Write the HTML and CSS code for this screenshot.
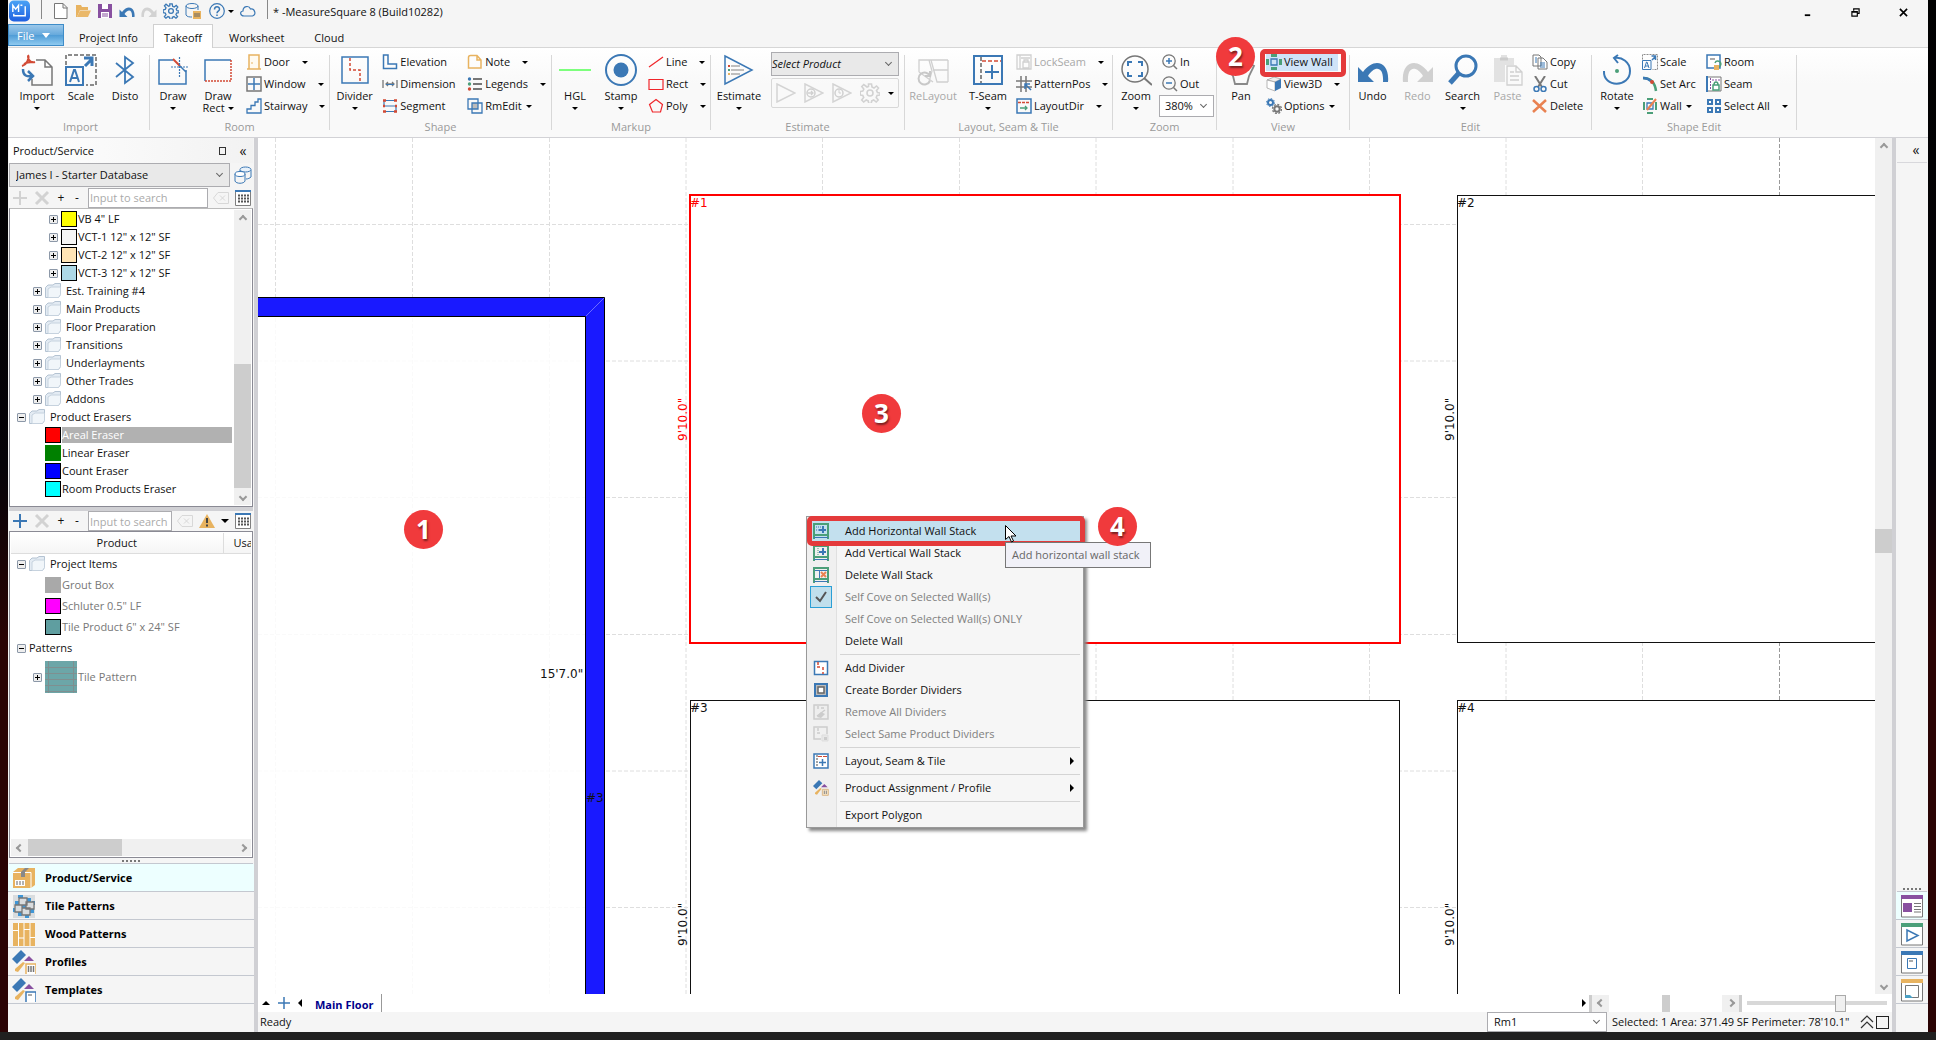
FILE: index.html
```html
<!DOCTYPE html>
<html lang="en">
<head>
<meta charset="utf-8">
<title>MeasureSquare 8</title>
<link rel="stylesheet" href="styles.css">
</head>
<body>
<svg class="defs" aria-hidden="true">
  <symbol id="folder" viewBox="0 0 16 16"><path d="M.5 14.500V4.500L3 2h5l2-1.500h5.500v11l-2 3z" fill="#e3ebf3" stroke="#b4c3d2"/><path d="M3 14.500V6l3-2h9.500v7.500l-2 3z" fill="#f1f6fa" stroke="#c6d2de"/></symbol>
  <symbol id="undo" viewBox="0 0 32 32"><path d="M1 13v15h16L11 22C17 12 27 11 26 28h5C33 9 18 2 6 18z" fill="currentColor"/></symbol>
  <symbol id="grid" viewBox="0 0 16 16"><path d="M.5 1v14.500h15V1" fill="#fff" stroke="#808080"/><path d="M0 1h16" stroke="#3b78b5" stroke-width="2"/><path d="M3 5.500h11M3 8.500h11M3 11.500h11" stroke="#555" stroke-width="2" stroke-dasharray="2 1"/></symbol>
  <symbol id="clear" viewBox="0 0 16 12"><path d="M5 .5h10.500v11H5L.5 6zM7 3.500l5 5M12 3.500l-5 5" fill="none" stroke="#d8d8d8"/></symbol>
  <symbol id="cross" viewBox="0 0 16 16"><path d="M2 2l12 12M14 2L2 14" stroke="#d2d2d2" stroke-width="3"/></symbol>
  <symbol id="plus" viewBox="0 0 16 16"><path d="M8 1v14M1 8h14" stroke="currentColor" stroke-width="2"/></symbol>
  <symbol id="scale" viewBox="0 0 32 32"><path d="M1 11V1h30v30H21" fill="none" stroke="#8b8b8b" stroke-width="2" stroke-dasharray="4 2"/><path d="M1 13h17v18H1zM5 28l4-12h1l4 12M6 24h7" fill="none" stroke="#3b78b5" stroke-width="2"/><path d="M20 12l7-7M19 4h8v8" fill="none" stroke="#3b78b5" stroke-width="3"/></symbol>
  <symbol id="play" viewBox="0 0 20 20"><path d="M1 1l18 9-18 9z" fill="none" stroke="#d4d4d4" stroke-width="1.500"/></symbol>
  <symbol id="gear" viewBox="0 0 20 20"><path d="M8.500 1h3l.5 3 2 1 2.500-2 2 2-2 2.500 1 2 2.500.5v2l-3 .5-.8 2 2 2.500-2 2-2.500-2-2 .9-.5 2.600h-2.400l-.6-2.600-2-.9-2.500 2-2-2 2-2.500-.9-2-2.600-.5V8.500l2.600-.5 1-2-2-2.500 2-2L7 4l1.500-.6z" fill="none" stroke="currentColor" stroke-width="1.600"/><circle cx="10" cy="10" r="3" fill="none" stroke="currentColor" stroke-width="1.600"/></symbol>
  <symbol id="profile" viewBox="0 0 24 24"><path d="M0 9L9 0l5 5-9 9z" fill="#3b78b5"/><path d="M12 11l5-5 5 5z" fill="#8850a0"/><path d="M3 19l8-7 2 1-3 4-4 5-3-1z" fill="#e8b360"/></symbol>
  <symbol id="stack" viewBox="0 0 16 16"><path d="M1 16V1h14v15M1 12h14" fill="none" stroke="#4b9f79" stroke-width="2"/><path d="M1 14.500h14" stroke="#3b78b5"/></symbol>
</svg>

<div class="desktop">
<main class="app">
  <header class="titlebar">
    <svg class="logo" viewBox="0 0 22 22"><defs><linearGradient id="lg" x2="0" y2="1"><stop stop-color="#4aa3f5"/><stop offset="1" stop-color="#1f5fe0"/></linearGradient></defs><rect width="22" height="22" rx="5" fill="url(#lg)"/><path d="M4 12V5l3 4 3-4v7M12 5h2M5 14v2h12V6" fill="none" stroke="#fff" stroke-width="1.500"/></svg>
    <i class="bar"></i>
    <nav class="quick" aria-label="Quick access">
      <button aria-label="New"><svg viewBox="0 0 16 16"><path d="M1.500 .5h8.500l4 4v11h-12.500zM10 .5v4.500h4.500" fill="#fff" stroke="#777"/></svg></button>
      <button aria-label="Open"><svg viewBox="0 0 16 16"><path d="M1 14V2h5l1 2h6v3H5L2 14z" fill="#e8b360"/><path d="M5 7.500h11L13 14H2z" fill="#eab869"/></svg></button>
      <button aria-label="Save"><svg viewBox="0 0 16 16"><path d="M1 1h14v14H1z" fill="#8850a0"/><path d="M5 1h6v5H5zM4 9h8v6H4z" fill="#fff"/><path d="M5 11h6M5 13h6" stroke="#8850a0"/></svg></button>
      <button aria-label="Undo" class="blue"><svg><use href="#undo"/></svg></button>
      <button aria-label="Redo" class="pale flip"><svg><use href="#undo"/></svg></button>
      <button aria-label="Settings" class="blue"><svg><use href="#gear"/></svg></button>
      <button aria-label="Database"><svg viewBox="0 0 16 16"><path d="M1 3v9c1 2 4 2 6 2M13 3v4" fill="none" stroke="#3b78b5"/><ellipse cx="7" cy="3" rx="6" ry="2.500" fill="none" stroke="#3b78b5"/><path d="M8 8h8v8H8z" fill="#e8b360"/><path d="M10 10v4M12 10v4M14 10v4" stroke="#666"/></svg></button>
      <button aria-label="Help" class="help"><svg viewBox="0 0 16 16"><circle cx="8" cy="8" r="7.300" fill="none" stroke="#3b78b5" stroke-width="1.200"/><path d="M5.500 6.500C5.500 3 10.500 3 10.500 6.200c0 2-2.500 2-2.500 4M8 11.500v1.500" fill="none" stroke="#3b78b5" stroke-width="1.500"/></svg><i class="caret"></i></button>
      <button aria-label="Cloud"><svg viewBox="0 0 16 16"><path d="M4 13C0 13-.5 8.500 3 8 3 3 9 2 10.500 6c4-1 6.500 6 2 7z" fill="none" stroke="#3b78b5" stroke-width="1.200"/></svg></button>
    </nav>
    <i class="bar"></i>
    <h1>* -MeasureSquare 8 (Build10282)</h1>
    <div class="window-buttons">
      <button aria-label="Minimize"><svg viewBox="0 0 10 10"><path d="M2 8h6" stroke="#000" stroke-width="2"/></svg></button>
      <button aria-label="Restore"><svg viewBox="0 0 10 10"><path d="M3 3V1h6v5H7M1 4h6v5H1zM1 4.500h6" fill="none" stroke="#000" stroke-width="1.300"/></svg></button>
      <button aria-label="Close"><svg viewBox="0 0 10 10"><path d="M1 1l8 8M9 1L1 9" stroke="#000" stroke-width="1.800"/></svg></button>
    </div>
  </header>
  <nav class="tabs" aria-label="Ribbon tabs">
    <button class="file">File <i></i></button>
    <button>Project Info</button>
    <button class="on">Takeoff</button>
    <button>Worksheet</button>
    <button>Cloud</button>
  </nav>

  <div class="ribbon">
    <section class="group import">
      <div class="tools">
        <button class="big"><svg viewBox="0 0 32 32"><path d="M15 6h9l7 7v18H11v-6M24 6v7h7" fill="none" stroke="#777" stroke-width="1.500"/><path d="M7 1c2 4-2 10-6 11M7 2c0 5 4 7 7 6M3 10c3-2 7-2 9-2" fill="none" stroke="#d24a35" stroke-width="2"/><path d="M2 15c0 7 4 8 10 7M7 17l5 5-5 5" fill="none" stroke="#3b78b5" stroke-width="2.500"/></svg><span>Import</span><i class="caret"></i></button>
        <button class="big"><svg><use href="#scale"/></svg><span>Scale</span></button>
        <button class="big"><svg viewBox="0 0 32 32"><path d="M7 9l17 14-8 6V3l8 6L7 23" fill="none" stroke="#3b78b5" stroke-width="1.800"/></svg><span>Disto</span></button>
      </div>
      <h2>Import</h2>
    </section>
    <i class="sep"></i>
    <section class="group room">
      <div class="tools">
        <button class="big"><svg viewBox="0 0 32 32"><path d="M16 6H2v24h27V16" fill="none" stroke="#3b78b5" stroke-width="1.500"/><path d="M16 5l7 7" stroke="#d24a35" stroke-width="2"/><path d="M23 12l6 6" stroke="#3b78b5" stroke-width="1.500"/><path d="M22.500 3v20M14 13h18" stroke="#3b78b5" stroke-width="1.200" stroke-dasharray="2 1"/></svg><span>Draw</span><i class="caret"></i></button>
        <button class="big"><svg viewBox="0 0 32 32"><path d="M3 27V6h26" fill="none" stroke="#3b78b5" stroke-width="1.500"/><path d="M3 27h26V6" fill="none" stroke="#d24a35" stroke-width="1.500" stroke-dasharray="2 1"/></svg><span>Draw<br>Rect <i class="caret"></i></span></button>
        <div class="col">
          <button class="small"><svg viewBox="0 0 16 16"><path d="M3 15V1h10v14M1 15h14" fill="#fffaf0" stroke="#e8b360" stroke-width="1.500"/><path d="M6 8v2" stroke="#e8b360"/></svg>Door<i class="caret"></i></button>
          <button class="small"><svg viewBox="0 0 16 16"><path d="M1 1h14v14H1z" fill="none" stroke="#777" stroke-width="1.500"/><path d="M8 2v12M2 8h12" stroke="#3b78b5" stroke-width="1.500"/></svg>Window<i class="caret"></i></button>
          <button class="small"><svg viewBox="0 0 16 16"><path d="M1 15v-4h4V7.500h4V4h3V1h3v14z" fill="none" stroke="#3b78b5" stroke-width="1.300"/></svg>Stairway<i class="caret"></i></button>
        </div>
      </div>
      <h2>Room</h2>
    </section>
    <i class="sep"></i>
    <section class="group shape">
      <div class="tools">
        <button class="big"><svg viewBox="0 0 32 32"><path d="M3 3h26v26H3z" fill="none" stroke="#3b78b5" stroke-width="1.500"/><path d="M11 4v12h10v12" fill="none" stroke="#d24a35" stroke-width="1.500" stroke-dasharray="3 2"/></svg><span>Divider</span><i class="caret"></i></button>
        <div class="col">
          <button class="small"><svg viewBox="0 0 16 16"><path d="M1.500 1h4.500v9h8.500v4.500H1.500z" fill="none" stroke="#3b78b5" stroke-width="1.500"/></svg>Elevation</button>
          <button class="small"><svg viewBox="0 0 16 16"><path d="M1 4v8M15 4v8M4 8h8M6 6L4 8l2 2M10 6l2 2-2 2" fill="none" stroke="#777" stroke-width="1.300"/><path d="M4 8.500h8" stroke="#3b78b5"/></svg>Dimension</button>
          <button class="small"><svg viewBox="0 0 16 16"><path d="M2 2.500h12M2 8h12M2 13.500h12M2 3v5M14 8v5" fill="none" stroke="#3b78b5" stroke-width="1.200"/><path d="M1 2.500h3M12 2.500h3M1 13.500h3M12 13.500h3M1 8h2M13 8h2" stroke="#d24a35" stroke-width="2.500"/></svg>Segment</button>
        </div>
        <div class="col flush">
          <button class="small"><svg viewBox="0 0 16 16"><path d="M1.500 3.500c0-1 0-2 2-2H10l4 4.500v8H1.500zM10 2v4h4" fill="none" stroke="#e8b360" stroke-width="1.500"/></svg>Note<i class="caret"></i></button>
          <button class="small"><svg viewBox="0 0 16 16"><path d="M6 3h9M6 8h9M6 13h9" stroke="#777" stroke-width="2"/><circle cx="2.500" cy="3" r="1.700" fill="#3b78b5"/><circle cx="2.500" cy="8" r="1.700" fill="#4b9f79"/><circle cx="2.500" cy="13" r="1.700" fill="#d24a35"/></svg>Legends<i class="caret"></i></button>
          <button class="small near"><svg viewBox="0 0 16 16"><path d="M5 5h6v6H5z" fill="#bbb"/><path d="M1 1h10v10H1zM5 5h10v10H5z" fill="none" stroke="#3b78b5" stroke-width="1.300"/></svg>RmEdit<i class="caret"></i></button>
        </div>
      </div>
      <h2>Shape</h2>
    </section>
    <i class="sep"></i>
    <section class="group markup">
      <div class="tools">
        <button class="big"><svg viewBox="0 0 32 32"><path d="M0 16h32" stroke="#7dff7d" stroke-width="2"/></svg><span>HGL</span><i class="caret"></i></button>
        <button class="big"><svg viewBox="0 0 32 32"><circle cx="16" cy="16" r="15" fill="none" stroke="#3b78b5" stroke-width="2"/><circle cx="16" cy="16" r="7.500" fill="#3b78b5"/></svg><span>Stamp</span><i class="caret"></i></button>
        <div class="col">
          <button class="small"><svg viewBox="0 0 16 16"><path d="M1 13L15 3" stroke="#f0262b" stroke-width="1.200"/></svg>Line<i class="caret"></i></button>
          <button class="small"><svg viewBox="0 0 16 16"><path d="M1 3.500h14v10H1z" fill="none" stroke="#f0262b" stroke-width="1.200"/></svg>Rect<i class="caret"></i></button>
          <button class="small"><svg viewBox="0 0 16 16"><path d="M8 1.500l6.500 5-2 7.500h-8L1.500 6.500z" fill="none" stroke="#f0262b" stroke-width="1.200"/></svg>Poly<i class="caret"></i></button>
        </div>
      </div>
      <h2>Markup</h2>
    </section>
    <i class="sep"></i>
    <section class="group estimate">
      <div class="tools">
        <button class="big"><svg viewBox="0 0 32 32"><path d="M2 2l27 14L2 30z" fill="none" stroke="#3b78b5" stroke-width="1.500"/><path d="M8 12h9M8 16h13M8 20h9" stroke="#aaa" stroke-width="1.500"/><path d="M5 12h2" stroke="#d24a35" stroke-width="2"/><path d="M5 16h2" stroke="#4b9f79" stroke-width="2"/><path d="M5 20h2" stroke="#e8b360" stroke-width="2"/></svg><span>Estimate</span><i class="caret"></i></button>
        <div class="col">
          <label class="combo product"><select aria-label="Product"><option>Select Product</option></select></label>
          <div class="playbar">
            <button aria-label="Run"><svg><use href="#play"/></svg></button>
            <button aria-label="Run next"><svg viewBox="0 0 20 20"><path d="M1 1l18 9-18 9z" fill="none" stroke="#d4d4d4" stroke-width="1.500"/><circle cx="7" cy="10" r="4" fill="none" stroke="#d0d0d0" stroke-width="1.500"/><path d="M4 10h5M7 8l2 2-2 2" fill="none" stroke="#d0d0d0" stroke-width="1.300"/></svg></button>
            <button aria-label="Run timed"><svg viewBox="0 0 20 20"><path d="M1 1l18 9-18 9z" fill="none" stroke="#d4d4d4" stroke-width="1.500"/><circle cx="7" cy="10" r="4" fill="none" stroke="#d0d0d0" stroke-width="1.500"/><path d="M7 7v3h2" fill="none" stroke="#d0d0d0"/></svg></button>
            <button aria-label="Estimate options" class="pale"><svg><use href="#gear"/></svg></button>
            <i class="caret"></i>
          </div>
        </div>
      </div>
      <h2>Estimate</h2>
    </section>
    <i class="sep"></i>
    <section class="group layout">
      <div class="tools">
        <button class="big" disabled><svg viewBox="0 0 32 32"><path d="M2 18V6h29M14 6l6 22h11M31 6v22M16 16h15M2 18l14 10M12 6l3 11-3 11" fill="none" stroke="#d0d0d0" stroke-width="1.300"/><path d="M13 22a6 6 0 1 0 0 5M13 17v5H8" fill="none" stroke="#c8c8c8" stroke-width="2"/></svg><span>ReLayout</span></button>
        <button class="big"><svg viewBox="0 0 32 32"><path d="M2 2h28v28H2z" fill="none" stroke="#3b78b5" stroke-width="2"/><path d="M9 3v26" stroke="#888" stroke-width="2" stroke-dasharray="4 2"/><path d="M10 7h19" stroke="#d24a35" stroke-width="1.500" stroke-dasharray="4 2"/><path d="M20 11v14M13 18h14" stroke="#3b78b5" stroke-width="2"/></svg><span>T-Seam</span><i class="caret"></i></button>
        <div class="col">
          <button class="small" disabled><svg viewBox="0 0 16 16"><path d="M1 1h14v14H1zM4 1v14M5 4h9M7 8h6v6H7zM8 8V6h4v2" fill="none" stroke="#d0d0d0" stroke-width="1.300"/></svg>LockSeam<i class="caret"></i></button>
          <button class="small"><svg viewBox="0 0 16 16"><path d="M5 0v16M10 0v16M0 5h16M0 11h16" stroke="#777" stroke-width="1.500"/><path d="M9 8l6 6M9 13V8h5" fill="none" stroke="#3b78b5" stroke-width="1.500"/></svg>PatternPos<i class="caret"></i></button>
          <button class="small"><svg viewBox="0 0 16 16"><path d="M1 1h14v14H1z" fill="none" stroke="#3b78b5" stroke-width="1.500"/><path d="M2 4.500h12" stroke="#d24a35" stroke-width="1.500" stroke-dasharray="3 1"/><path d="M4 10h7M9 8l2 2-2 2" fill="none" stroke="#4b9f79" stroke-width="1.300"/></svg>LayoutDir<i class="caret"></i></button>
        </div>
      </div>
      <h2>Layout, Seam &amp; Tile</h2>
    </section>
    <i class="sep"></i>
    <section class="group zoom">
      <div class="tools">
        <button class="big"><svg viewBox="0 0 32 32"><circle cx="15" cy="15" r="13" fill="none" stroke="#777" stroke-width="1.500"/><path d="M24 24l8 7" stroke="#777" stroke-width="2"/><path d="M8 12V8h4M18 8h4v4M22 18v4h-4M12 22H8v-4" fill="none" stroke="#3b78b5" stroke-width="2"/></svg><span>Zoom</span><i class="caret"></i></button>
        <div class="col">
          <button class="small"><svg viewBox="0 0 16 16"><circle cx="7" cy="7" r="6.200" fill="none" stroke="#777" stroke-width="1.300"/><path d="M11.500 11.500L15 15" stroke="#777" stroke-width="1.500"/><path d="M7 4v6M4 7h6" stroke="#3b78b5" stroke-width="1.500"/></svg>In</button>
          <button class="small"><svg viewBox="0 0 16 16"><circle cx="7" cy="7" r="6.200" fill="none" stroke="#777" stroke-width="1.300"/><path d="M11.500 11.500L15 15" stroke="#777" stroke-width="1.500"/><path d="M4 7h6" stroke="#3b78b5" stroke-width="1.500"/></svg>Out</button>
          <label class="combo percent"><select aria-label="Zoom level"><option>380%</option></select></label>
        </div>
      </div>
      <h2>Zoom</h2>
    </section>
    <i class="sep"></i>
    <section class="group view">
      <div class="tools">
        <button class="big"><svg viewBox="0 0 32 32"><path d="M3 15l5 7 2 8h12l2-8 5-10-4-2-3 5V8H9v6z" fill="none" stroke="#888" stroke-width="1.800"/></svg><span>Pan</span></button>
        <div class="col">
          <button class="small hot"><svg viewBox="0 0 16 16"><path d="M5 5h6v6H5z" fill="none" stroke="#3b78b5" stroke-width="1.300"/><path d="M0 5h3v6H0zM13 5h3v6h-3zM5 0h6v3H5zM5 13h6v3H5z" fill="#4b9f79"/></svg>View Wall</button>
          <button class="small"><svg viewBox="0 0 16 16"><path d="M1 4l7-3 7 2-6 3z" fill="#eee" stroke="#999" stroke-width=".7"/><path d="M1 4l8 2v9l-8-3z" fill="#fff" stroke="#999" stroke-width=".7"/><path d="M9 6l6-3v9l-6 3z" fill="#3b78b5"/></svg>View3D<i class="caret"></i></button>
          <button class="small near"><svg viewBox="0 0 16 16"><circle cx="4.500" cy="4.500" r="2.500" fill="none" stroke="#3b78b5" stroke-width="2"/><circle cx="4.500" cy="4.500" r="4" fill="none" stroke="#3b78b5" stroke-dasharray="1.500 1.600"/><circle cx="11" cy="11" r="2.700" fill="none" stroke="#777" stroke-width="2"/><circle cx="11" cy="11" r="4.500" fill="none" stroke="#777" stroke-width="1.300" stroke-dasharray="2 1.500"/></svg>Options<i class="caret"></i></button>
        </div>
      </div>
      <h2>View</h2>
      <i class="frame"></i>
      <b class="pin pin-2">2</b>
    </section>
    <i class="sep"></i>
    <section class="group edit">
      <div class="tools">
        <button class="big blue"><svg><use href="#undo"/></svg><span>Undo</span></button>
        <button class="big flip" disabled><svg><use href="#undo"/></svg><span>Redo</span></button>
        <button class="big"><svg viewBox="0 0 32 32"><circle cx="19" cy="12" r="10" fill="none" stroke="#3b78b5" stroke-width="3"/><path d="M12 19L3 29" stroke="#3b78b5" stroke-width="5"/></svg><span>Search</span><i class="caret"></i></button>
        <button class="big" disabled><svg viewBox="0 0 32 32"><path d="M2 4h7V1h6v3h7v7h-9v17H2z" fill="#e2e2e2"/><path d="M8 5h8" stroke="#ccc" stroke-width="3"/><path d="M15 12h9l6 6v13H15zM24 12v6h6M18 18h4M18 22h9M18 26h9" fill="#fafafa" stroke="#d0d0d0" stroke-width="1.300"/></svg><span>Paste</span></button>
        <div class="col">
          <button class="small"><svg viewBox="0 0 16 16"><path d="M1 1h6l2 2v9H1zM6 4h5l4 4v7H6z" fill="#fff" stroke="#777"/><path d="M3 4h2M3 6h2M3 8h2M8 9h5M8 11h5M8 13h5" stroke="#3b78b5"/></svg>Copy</button>
          <button class="small"><svg viewBox="0 0 16 16"><path d="M3 0l7 11M13 0L6 11" stroke="#777" stroke-width="2"/><circle cx="4.500" cy="13" r="2.500" fill="none" stroke="#3b78b5" stroke-width="1.500"/><circle cx="11.500" cy="13" r="2.500" fill="none" stroke="#3b78b5" stroke-width="1.500"/></svg>Cut</button>
          <button class="small"><svg viewBox="0 0 16 16"><path d="M1 2l13 12M14 2L1 14" stroke="#e98252" stroke-width="2.500"/></svg>Delete</button>
        </div>
      </div>
      <h2>Edit</h2>
    </section>
    <i class="sep"></i>
    <section class="group shape-edit">
      <div class="tools">
        <button class="big"><svg viewBox="0 0 32 32"><path d="M3 17c-1 17 26 17 26 0 0-9-8-14-15-13M17 1l-4 3 4 5" fill="none" stroke="#3b78b5" stroke-width="2"/><circle cx="16" cy="17" r="2" fill="#4b9f79"/></svg><span>Rotate</span><i class="caret"></i></button>
        <div class="col">
          <button class="small"><svg><use href="#scale"/></svg>Scale</button>
          <button class="small"><svg viewBox="0 0 16 16"><path d="M1 2c8 0 12 5 13 13" fill="none" stroke="#4b9f79" stroke-width="2.500"/><path d="M1 2c3 0 6 1 8 3" fill="none" stroke="#3b78b5" stroke-width="2.500"/><circle cx="10" cy="6" r="2" fill="#d24a35"/></svg>Set Arc</button>
          <button class="small near"><svg viewBox="0 0 16 16"><path d="M5 5h6v6H5z" fill="none" stroke="#3b78b5" stroke-width="1.300"/><path d="M1 4h2v8H1zM13 4h2v8h-2zM5 0h6v2H5zM5 14h6v2H5z" fill="#4b9f79"/><path d="M5 12L14 1" stroke="#e98252" stroke-width="2"/></svg>Wall<i class="caret"></i></button>
        </div>
        <div class="col flush">
          <button class="small"><svg viewBox="0 0 16 16"><path d="M1 1h13v13H1z" fill="#fff" stroke="#3b78b5" stroke-width="1.500"/><path d="M4 4h5v2H4z" fill="#aaa"/><path d="M9 9a3 3 0 1 1 2 4" fill="none" stroke="#4b9f79" stroke-width="1.500"/><path d="M8 11h5v5H8z" fill="#e8b360"/></svg>Room</button>
          <button class="small"><svg viewBox="0 0 16 16"><path d="M1 1h14v14H1z" fill="#fff" stroke="#777"/><path d="M1 0v16" stroke="#3b78b5" stroke-width="2"/><path d="M4.500 2v12M6 4h8" stroke="#8850a0" stroke-dasharray="2 1"/><path d="M7 9h6v5H7zM8 9c0-4 4-4 4 0" fill="none" stroke="#4b9f79" stroke-width="1.500"/></svg>Seam</button>
          <button class="small"><svg viewBox="0 0 16 16"><path d="M2 2h4v4H2zM10 2h4v4h-4zM2 10h4v4H2zM10 10h4v4h-4z" fill="#fff" stroke="#3b78b5" stroke-width="2"/></svg>Select All<i class="caret"></i></button>
        </div>
      </div>
      <h2>Shape Edit</h2>
    </section>
    <i class="sep"></i>
  </div>

  <div class="work">
    <aside class="side-left">
      <div class="panel-head"><h2>Product/Service</h2><button aria-label="Float"><i class="box"></i></button><button aria-label="Collapse">«</button></div>
      <div class="database">
        <label class="combo"><select aria-label="Database"><option>James I - Starter Database</option></select></label>
        <button aria-label="Databases"><svg viewBox="0 0 18 18"><path d="M6 4v5M17 4v7c-1 1-3 2-5 2M1 8v7c1 3 9 3 10 0V8" fill="none" stroke="#3b78b5"/><ellipse cx="11.500" cy="3.500" rx="5.500" ry="2.500" fill="#e8f1fa" stroke="#3b78b5"/><ellipse cx="6" cy="8" rx="5" ry="2.500" fill="#fff" stroke="#3b78b5"/></svg></button>
      </div>
      <div class="toolrow">
        <button class="pale" aria-label="Add"><svg><use href="#plus"/></svg></button>
        <button aria-label="Remove"><svg><use href="#cross"/></svg></button>
        <button class="sign">+</button><button class="sign">-</button>
        <input type="text" placeholder="Input to search" aria-label="Search products">
        <button aria-label="Clear"><svg><use href="#clear"/></svg></button>
        <button aria-label="Columns"><svg><use href="#grid"/></svg></button>
      </div>
      <div class="treebox">
        <ul class="tree">
          <li class="l3"><i class="exp"></i><i class="sw yellow"></i>VB 4" LF</li>
          <li class="l3"><i class="exp"></i><i class="sw smoke"></i>VCT-1 12" x 12" SF</li>
          <li class="l3"><i class="exp"></i><i class="sw peach"></i>VCT-2 12" x 12" SF</li>
          <li class="l3"><i class="exp"></i><i class="sw sky"></i>VCT-3 12" x 12" SF</li>
          <li class="l2"><i class="exp"></i><svg><use href="#folder"/></svg>Est. Training #4</li>
          <li class="l2"><i class="exp"></i><svg><use href="#folder"/></svg>Main Products</li>
          <li class="l2"><i class="exp"></i><svg><use href="#folder"/></svg>Floor Preparation</li>
          <li class="l2"><i class="exp"></i><svg><use href="#folder"/></svg>Transitions</li>
          <li class="l2"><i class="exp"></i><svg><use href="#folder"/></svg>Underlayments</li>
          <li class="l2"><i class="exp"></i><svg><use href="#folder"/></svg>Other Trades</li>
          <li class="l2"><i class="exp"></i><svg><use href="#folder"/></svg>Addons</li>
          <li class="l1"><i class="exp open"></i><svg><use href="#folder"/></svg>Product Erasers</li>
          <li class="leaf"><i class="sw red"></i><span class="selected">Areal Eraser</span></li>
          <li class="leaf"><i class="sw green"></i>Linear Eraser</li>
          <li class="leaf"><i class="sw blue-fill"></i>Count Eraser</li>
          <li class="leaf"><i class="sw cyan"></i>Room Products Eraser</li>
        </ul>
        <div class="vscroll tree-scroll"><i class="chev chev-up"></i><span></span><i class="chev"></i></div>
      </div>
      <div class="toolrow second">
        <button class="blue" aria-label="Add"><svg><use href="#plus"/></svg></button>
        <button aria-label="Remove"><svg><use href="#cross"/></svg></button>
        <button class="sign">+</button><button class="sign">-</button>
        <input type="text" placeholder="Input to search" aria-label="Search project items">
        <button aria-label="Clear"><svg><use href="#clear"/></svg></button>
        <button aria-label="Warnings" class="warn"><svg viewBox="0 0 16 16"><path d="M8 1l8 14H0z" fill="#e8b360"/><path d="M8 5v5M8 11.500v2" stroke="#444" stroke-width="2"/></svg><i class="caret wide"></i></button>
        <button aria-label="Columns"><svg><use href="#grid"/></svg></button>
      </div>
      <div class="items">
        <table>
          <thead><tr><th>Product</th><th>Usage</th></tr></thead>
          <tbody>
            <tr><td colspan="2"><div class="row l1"><i class="exp open"></i><svg><use href="#folder"/></svg>Project Items</div></td></tr>
            <tr><td colspan="2"><div class="row leaf dim"><i class="sw gray"></i>Grout Box</div></td></tr>
            <tr><td colspan="2"><div class="row leaf dim"><i class="sw magenta"></i>Schluter 0.5" LF</div></td></tr>
            <tr><td colspan="2"><div class="row leaf dim"><i class="sw teal"></i>Tile Product 6" x 24" SF</div></td></tr>
            <tr><td colspan="2"><div class="row l1"><i class="exp open"></i>Patterns</div></td></tr>
            <tr><td colspan="2"><div class="row l2 dim tall"><i class="exp"></i><svg class="pattern" viewBox="0 0 32 32"><path d="M0 0h32v32H0z" fill="#6ca6a8"/><path d="M0 6.500h32M0 12.500h32M0 18.500h32M0 24.500h32M0 30.500h32M3.500 0v32M28.500 0v32" stroke="#7f8f90"/></svg>Tile Pattern</div></td></tr>
          </tbody>
        </table>
        <div class="hscroll"><i class="chev chev-left"></i><span></span><i class="chev chev-right"></i></div>
      </div>
      <div class="grip"></div>
      <nav class="stackbar" aria-label="Panels">
        <button class="on"><svg viewBox="0 0 24 24"><path d="M1 6l5-4h17v17l-4 3H1z" fill="#e8b360"/><path d="M1 6.500h18V22" fill="none" stroke="#fff"/><path d="M9 6h4v5H9zM13 2h4l-4 4H9z" fill="#888"/><path d="M3 14h10v6H3z" fill="#fff"/><path d="M5 15v4M8 15v4M11 15v4" stroke="#666"/></svg>Product/Service</button>
        <button><svg viewBox="0 0 24 24"><path d="M1 1h22v23H1z" fill="#d9dcde"/><path d="M6 1h5v3H6zM15 4h4v4h-4zM3 7h4v4H3zM10 10h4v4h-4zM20 7h3v4h-3zM1 14h3v4H1zM18 15h4v4h-4zM6 18h4v4H6zM13 21h4v3h-4z" fill="#3f96d6"/><path d="M7 4h8v7H7zM14 8h8v7h-8zM3 11h7v7H3zM10 14h8v7h-8z" fill="#d9dcde" stroke="#777" stroke-width="1.300"/></svg>Tile Patterns</button>
        <button><svg viewBox="0 0 24 24"><path d="M1 1h22v23H1z" fill="#e8b360"/><path d="M6.500 1v23M12 1v23M18 1v23M1 8.500h5M7 16h5M12 7.500h6M18 15.500h5" stroke="#fff"/></svg>Wood Patterns</button>
        <button><svg viewBox="0 0 24 24"><use href="#profile"/><path d="M14 24v-10h10v10" fill="#fff" stroke="#e8b360" stroke-width="1.500"/><path d="M16.500 16v6M19 16v6M21.500 16v6" stroke="#777" stroke-width="1.500"/></svg>Profiles</button>
        <button><svg viewBox="0 0 24 24"><use href="#profile"/><path d="M14 24v-10h10v10" fill="#fff" stroke="#3b78b5" stroke-width="1.500"/><path d="M16 17h4" stroke="#aaa" stroke-width="2"/></svg>Templates</button>
      </nav>
    </aside>

    <section class="center">
      <div class="stage">
        <div class="canvas">
          <svg class="plan" aria-label="Floor plan">
            <g class="gridlines">
              <path d="M17.500 0v900M154.500 0v900M291.500 0v900M428 0v900M564.500 0v900M701.500 0v900M838 0v900M975 0v900M1111.500 0v900M1248 0v900M1384.500 0v900M0 86.500h1700M0 223h1700M0 359.500h1700M0 496.500h1700M0 633h1700M0 769.500h1700"/>
              <path class="strong" d="M1521.500 0v900"/>
            </g>
            <path class="cover" d="M0 178.500h328v1000H0z"/>
            <path class="wall" d="M-9 159.500h355.500V1200h-19V178.500H-9z"/>
            <path class="miter" d="M328 178l18-18"/>
            <rect class="rm sel" x="432" y="57" width="710" height="448"/>
            <rect class="rm" x="1199.500" y="57.500" width="900" height="447"/>
            <rect class="rm" x="432.500" y="562.500" width="709" height="900"/>
            <rect class="rm" x="1199.500" y="562.500" width="900" height="900"/>
            <g class="dims">
              <text class="redtext" x="432" y="69">#1</text>
              <text x="1199" y="69">#2</text>
              <text x="432" y="574">#3</text>
              <text x="1199" y="574">#4</text>
              <text x="282" y="540">15'7.0"</text>
              <text x="328" y="664">#3</text>
              <text class="redtext" transform="translate(429 303) rotate(-90)">9'10.0"</text>
              <text transform="translate(1196 303) rotate(-90)">9'10.0"</text>
              <text transform="translate(429 808) rotate(-90)">9'10.0"</text>
              <text transform="translate(1196 808) rotate(-90)">9'10.0"</text>
            </g>
          </svg>
          <b class="pin pin-1">1</b>
          <b class="pin pin-3">3</b>

          <menu class="context">
            <li><button class="hover"><svg viewBox="0 0 16 16"><use href="#stack"/><path d="M3 4h7M3 7h3" stroke="#3b78b5" stroke-dasharray="1 1"/><path d="M10 3v7M6 7h7" stroke="#3b78b5" stroke-width="2"/></svg>Add Horizontal Wall Stack</button></li>
            <li><button><svg viewBox="0 0 16 16"><use href="#stack"/><path d="M5 3v8" stroke="#4b9f79" stroke-dasharray="1 1"/><path d="M10 3v7M6 7h7" stroke="#3b78b5" stroke-width="2"/></svg>Add Vertical Wall Stack</button></li>
            <li><button><svg viewBox="0 0 16 16"><use href="#stack"/><path d="M2 3.500h12M6.500 3v8" stroke="#3b78b5"/><path d="M8 5l5 5M13 5l-5 5" stroke="#e98252" stroke-width="2"/></svg>Delete Wall Stack</button></li>
            <li><button disabled><i class="check"><svg viewBox="0 0 16 16"><path d="M3 8l4 4 6-9" fill="none" stroke="#555" stroke-width="2"/></svg></i>Self Cove on Selected Wall(s)</button></li>
            <li><button disabled><svg></svg>Self Cove on Selected Wall(s) ONLY</button></li>
            <li><button><svg></svg>Delete Wall</button></li>
            <li class="rule"></li>
            <li><button><svg viewBox="0 0 16 16"><path d="M1.500 1.500h13v13h-13z" fill="#fff" stroke="#3b78b5" stroke-width="1.500"/><path d="M5 2v3M4 7h3M10 7v3M10 12v2" stroke="#d24a35" stroke-width="1.500"/></svg>Add Divider</button></li>
            <li><button><svg viewBox="0 0 16 16"><path d="M1 1h14v14H1z" fill="#3b78b5"/><path d="M3 3h10v10H3z" fill="#bbb"/><path d="M5 5h6v6H5z" fill="#fff" stroke="#666" stroke-width="1.500"/></svg>Create Border Dividers</button></li>
            <li><button disabled><svg viewBox="0 0 16 16"><path d="M1 1h14v14H1zM5 2v3M8 4h3M4 12l8-6" fill="#eee" stroke="#ccc" stroke-width="1.500"/><path d="M4 13l4-5 4 2-4 4z" fill="#ccc"/></svg>Remove All Dividers</button></li>
            <li><button disabled><svg viewBox="0 0 16 16"><path d="M14 8V1H1v12h7M5 2v3M4 7h3" fill="none" stroke="#ccc" stroke-width="1.500"/><path d="M9 9h6v6H9z" fill="#e8e8e8" stroke="#ddd"/><path d="M11 11h3v3h-3z" fill="#ccc"/></svg>Select Same Product Dividers</button></li>
            <li class="rule"></li>
            <li><button><svg viewBox="0 0 16 16"><path d="M1 1h14v14H1z" fill="#fff" stroke="#3b78b5" stroke-width="1.500"/><path d="M4 2v12" stroke="#888" stroke-width="1.500" stroke-dasharray="2 1"/><path d="M5 3.500h9" stroke="#d24a35" stroke-dasharray="4 1"/><path d="M9.500 6v7M6 9.500h7" stroke="#3b78b5" stroke-width="1.500"/></svg>Layout, Seam &amp; Tile<i class="sub"></i></button></li>
            <li class="rule"></li>
            <li><button><svg viewBox="0 0 24 24"><use href="#profile"/><path d="M14 23v-9h9v9z" fill="#f5e2c4" stroke="#dcb98a" stroke-width="1.500"/><path d="M17 16v5M20 16v5" stroke="#888" stroke-width="1.500"/></svg>Product Assignment / Profile<i class="sub"></i></button></li>
            <li class="rule"></li>
            <li><button><svg></svg>Export Polygon</button></li>
          </menu>
          <i class="menu-frame"></i>
          <div class="tooltip" role="tooltip">Add horizontal wall stack</div>
          <b class="pin pin-4">4</b>
          <svg class="cursor" viewBox="0 0 12 18"><path d="M.5 .5v14l3.500-3 2.500 5.500 2-1-2.500-5h5z" fill="#fff" stroke="#000"/></svg>
        </div>
        <div class="vscroll stage-scroll"><i class="chev chev-up"></i><span></span><i class="chev"></i></div>
      </div>
      <div class="floorbar">
        <button aria-label="Floors"><i class="tri tri-up"></i></button>
        <button class="blue" aria-label="Add floor"><svg viewBox="0 0 12 12"><path d="M6 0v12M0 6h12" stroke="currentColor" stroke-width="1.500"/></svg></button>
        <button aria-label="Previous"><i class="tri tri-left"></i></button>
        <button class="floor">Main Floor</button>
        <button class="next" aria-label="Next"><i class="tri tri-right"></i></button>
        <div class="hbar"><i class="chev chev-left"></i><div><span></span></div><i class="chev chev-right"></i></div>
        <input type="range" min="0" max="100" value="68" aria-label="Zoom">
      </div>
      <footer class="status">
        <span>Ready</span>
        <label class="combo roompick"><select aria-label="Room"><option>Rm1</option></select></label>
        <output>Selected: 1 Area: 371.49 SF Perimeter: 78'10.1"</output>
        <button aria-label="Expand"><svg viewBox="0 0 14 14"><path d="M1 7l6-6 6 6M1 13l6-6 6 6" fill="none" stroke="#333" stroke-width="1.200"/></svg></button>
        <button aria-label="Maximize"><i class="square"></i></button>
      </footer>
    </section>

    <aside class="side-right">
      <button class="expand" aria-label="Expand panel">«</button>
      <div class="fill"></div>
      <div class="grip"></div>
      <nav class="stackbar" aria-label="Side panels">
        <button class="on" aria-label="Properties"><svg viewBox="0 0 24 24"><path d="M1.500 2v21h21V2" fill="#fff" stroke="#777"/><path d="M1 1h22v4H1zM3 9h9v9H3z" fill="#8850a0"/><path d="M14 9.500h7M14 12.500h7M14 15.500h7M14 18h7" stroke="#777"/></svg></button>
        <button aria-label="Estimate"><svg viewBox="0 0 24 24"><path d="M1.500 2v21h21V2" fill="#fff" stroke="#777"/><path d="M1 1h22v4H1z" fill="#4b9f79"/><path d="M7 8v11l11-5.500z" fill="none" stroke="#3b78b5" stroke-width="1.500"/></svg></button>
        <button aria-label="Layers"><svg viewBox="0 0 24 24"><path d="M1.500 2v21h21V2" fill="#fff" stroke="#777"/><path d="M1 1h22v4H1z" fill="#3b78b5"/><path d="M7.500 8.500h9v10h-9z" fill="none" stroke="#3b78b5"/><path d="M9 11h4" stroke="#aaa" stroke-width="2"/></svg></button>
        <button aria-label="Notes"><svg viewBox="0 0 24 24"><path d="M1.500 2v21h21V2" fill="#fff" stroke="#777"/><path d="M1 1h22v4H1z" fill="#e8b360"/><path d="M5.500 7.500h13v12h-13z" fill="none" stroke="#777"/><path d="M5 17h5l3 3H5z" fill="#4a9fc4"/></svg></button>
      </nav>
    </aside>
  </div>
</main>
</div>
</body>
</html>
```
FILE: styles.css
```css
*, *::before, *::after { box-sizing: border-box; }
body { margin: 0; font: 11px/18px "Open Sans", "Noto Sans", sans-serif; color: #111; }
h1, h2, ul, menu { margin: 0; padding: 0; font: inherit; list-style: none; }
button { border: 0; padding: 0; margin: 0; background: none; font: inherit; color: inherit; white-space: nowrap; }
button.blue, .blue > svg { color: #3b78b5; }
svg { display: block; flex: none; }
i { font-style: normal; flex: none; }
.defs { position: absolute; width: 0; height: 0; }

.desktop { min-height: 100vh; display: flex; padding: 0 8px; background: linear-gradient(#000, #060309 45%, #2a0304 62%, #2a0304); border-bottom: 8px solid #202020; }
.app { flex: 1; min-width: 0; display: flex; flex-direction: column; background: #f5f5f5; }

.caret { width: 0; height: 0; border: 3px solid transparent; border-top: 3px solid #000; border-bottom: 0; }
.caret.wide { border-width: 4px 4px 0; }
.chev { width: 17px; height: 17px; display: grid; place-items: center; }
.chev::before { content: ""; width: 6px; height: 6px; border: solid #999; border-width: 0 2px 2px 0; transform: rotate(45deg); }
.chev-up::before { transform: rotate(225deg); }
.chev-left::before { transform: rotate(135deg); }
.chev-right::before { transform: rotate(-45deg); }

/* title bar */
.titlebar { height: 24px; display: flex; align-items: flex-start; padding-left: 1px; }
.logo { width: 21px; height: 22px; }
.bar { width: 1px; height: 19px; background: #888; margin: 0 5px 0 11px; }
.quick { display: flex; gap: 6px; padding: 3px 0 0 6px; }
.quick svg { width: 16px; height: 16px; }
.quick .help { display: flex; align-items: center; gap: 3px; margin-left: 2px; }
.titlebar h1 { line-height: 24px; }
.pale { color: #d2d2d2; }
.flip > svg { transform: scaleX(-1); }
.window-buttons { margin-left: auto; display: flex; padding-right: 1px; }
.window-buttons button { width: 48px; height: 24px; display: grid; place-items: center; }
.window-buttons svg { width: 9px; height: 9px; }

/* tabs */
.tabs { display: flex; height: 24px; border-bottom: 1px solid #d6d6d6; }
.tabs button { padding: 0 14px; height: 24px; line-height: 26px; border: 1px solid transparent; border-bottom: 0; }
.tabs .on { background: #fff; border-color: #d0d0d0; padding: 0 10px; margin-right: 1px; }
.tabs .file { width: 56px; height: 22px; padding: 0 0 0 8px; text-align: left; line-height: 22px; color: #fff; border: 1px solid #3e8cc8; background: linear-gradient(#9cc8ea, #66a9dc 50%, #4f9cd6 51%, #8fcaf0); }
.file i { display: inline-block; border: 4px solid transparent; border-top: 5px solid #fff; border-bottom: 0; margin-left: 5px; vertical-align: 2px; }

/* ribbon */
.ribbon { display: flex; height: 90px; background: linear-gradient(#fff, #f9f9f9 40%); border-bottom: 1px solid #d2d2d6; }
.sep { width: 1px; margin: 7px 0; background: #d8d8d8; }
.group { position: relative; display: flex; flex-direction: column; }
.group h2 { text-align: center; color: #999; line-height: 20px; }
.tools { height: 69px; display: flex; }
.big { width: 44px; display: flex; flex-direction: column; align-items: center; justify-content: flex-start; padding-top: 6px; line-height: 12px; }
.big svg { width: 32px; height: 32px; margin-bottom: 4px; }
.big > .caret { margin-top: 5px; }
.big span .caret { display: inline-block; vertical-align: 2px; }
.big.blue span { color: #111; }
.col { display: flex; flex-direction: column; padding-top: 3px; align-items: flex-start; }
.small { display: flex; align-items: center; gap: 2px; height: 22px; }
.small svg { width: 16px; height: 16px; }
.small .caret { margin-left: 10px; }
.small.near .caret { margin-left: 2px; }
button:disabled { color: #a8a8a8; }
.big:disabled svg { color: #d0d0d0; }
.import { width: 141px; padding-left: 7px; }
.import h2 { margin-left: -3px; }
.room { width: 179px; } .room .big { width: 44px; } .room .big:first-child { width: 46px; } .room .col { padding-left: 6px; }
.shape { width: 221px; } .shape .big { width: 50px; } .shape .col { width: 87px; padding-left: 3px; }
.shape .flush { padding-left: 2px; }
.markup { width: 158px; } .markup .big { width: 46px; } .markup .col { padding-left: 4px; }
.estimate { width: 193px; } .estimate .big { width: 56px; } .estimate .col { padding: 4px 0 0 4px; }
.layout { width: 207px; } .layout .big { width: 54px; } .layout .big:first-child { width: 56px; } .layout .col { padding-left: 1px; }
.zoom { width: 103px; } .zoom .big { width: 46px; } .zoom .small { padding-left: 3px; }
.view { width: 132px; } .view .big { width: 48px; } .view .col { padding-left: 1px; }
.edit { width: 241px; } .edit .big { width: 45px; } .edit .col { padding-left: 2px; }
.shape-edit { width: 204px; } .shape-edit .big { width: 50px; } .shape-edit .col { width: 64px; }
.hot { height: 18px; margin: 2px 0; background: #cfe3f8; padding-right: 5px; }

.combo { position: relative; display: block; border: 1px solid #acacb0; background: #e9e9e9; }
.combo select { appearance: none; width: 100%; height: 100%; display: block; border: 0; background: none; font: inherit; color: inherit; padding: 0 18px 0 6px; }
.combo::after { content: ""; position: absolute; right: 7px; top: 50%; width: 5px; height: 5px; margin-top: -4px; border: solid #666; border-width: 0 1px 1px 0; transform: rotate(45deg); pointer-events: none; }
.product { width: 128px; height: 24px; font-style: italic; }
.product select { padding-left: 0; }
.percent { width: 55px; height: 22px; background: #fff; }
.percent select { padding: 0 0 0 5px; }
.playbar { width: 128px; height: 30px; margin-top: 2px; border: 1px solid #d8d8d8; border-radius: 2px; display: flex; align-items: center; gap: 8px; padding-left: 4px; }
.playbar svg { width: 20px; height: 20px; }

/* numbered pins and highlight frames */
.pin { position: absolute; z-index: 5; width: 39px; height: 39px; border-radius: 50%; background: #f03a3c; color: #fff; font: bold 26px/38px "Open Sans", sans-serif; text-align: center; text-shadow: 1px 2px 2px #7a2020; }
.pin-1 { left: 146px; top: 372px; }
.pin-2 { left: -1px; top: -11px; }
.pin-3 { left: 604px; top: 256px; }
.pin-4 { left: 840px; top: 369px; }
.frame { position: absolute; left: 43px; top: 1px; width: 86px; height: 28px; border: 5px solid #e43a3b; border-radius: 5px; }

/* work area */
.work { flex: 1; min-height: 0; display: flex; }
.side-left { width: 250px; flex: none; display: flex; flex-direction: column; padding: 0 1px; border-right: 4px solid #d0d0d4; }
.panel-head { height: 25px; display: flex; align-items: center; padding-left: 4px; background: linear-gradient(90deg, #fff, #f2f2f2); }
.panel-head h2 { margin-right: auto; }
.panel-head button { width: 20px; font-size: 14px; }
.box { display: block; width: 7px; height: 8px; margin: 0 6px; border: 1px solid #333; }
.database { display: flex; gap: 4px; height: 24px; align-items: center; }
.database .combo { width: 221px; height: 24px; }
.database svg { width: 18px; height: 18px; }
.toolrow { display: flex; align-items: center; height: 21px; padding: 0 2px 0 3px; }
.toolrow svg { width: 16px; height: 16px; }
.toolrow button + button { margin-left: 6px; }
.toolrow .sign { width: 10px; font-size: 12px; }
.toolrow input { flex: 1; min-width: 0; width: 0; height: 20px; margin: 0 5px 0 6px; padding: 0 1px; border: 1px solid #acacb0; background: #fff; font: inherit; }
input::placeholder { color: #aaa; }
.second { border-top: 4px solid #d0d0d4; height: 24px; }
.second button + button { margin-left: 6px; }
.second .warn { display: flex; align-items: center; gap: 6px; }
.treebox { height: 299px; display: flex; border: 1px solid #8a8a94; border-top-color: #bbb; background: #fff; padding: 1px; }
.tree { flex: 1; }
.tree li, .row { display: flex; align-items: center; height: 18px; white-space: nowrap; }
.tree svg, .row svg { width: 16px; height: 16px; margin-right: 5px; }
.l3 { padding-left: 38px; } .l2 { padding-left: 22px; } .l1 { padding-left: 6px; } .leaf { padding-left: 34px; }
.exp { width: 9px; height: 9px; margin-right: 3px; border: 1px solid #8c98a8; border-radius: 1px; background: linear-gradient(#000, #000) 1px 3px / 5px 1px no-repeat, linear-gradient(#000, #000) 3px 1px / 1px 5px no-repeat, #eee; }
.exp.open { background: linear-gradient(#000, #000) 1px 3px / 5px 1px no-repeat, #eee; }
.sw { width: 16px; height: 16px; border: 1px solid #000; margin-right: 1px; }
.yellow { background: #ff0; } .smoke { background: #f5f5f5; } .peach { background: #ffe4b5; } .sky { background: #add8e6; }
.red { background: #f00; } .green { background: #008000; border-color: #008000; } .blue-fill { background: #00f; } .cyan { background: #0ff; }
.gray { background: #a9a9a9; border-color: #a9a9a9; } .magenta { background: #f0f; } .teal { background: #5f9ea0; }
.selected { flex: 1; height: 16px; line-height: 16px; background: #b1b1b1; color: #fff; margin-right: 2px; }
.vscroll { width: 17px; display: flex; flex-direction: column; justify-content: space-between; background: #f0f0f0; }
.vscroll span { background: #cdcdcd; }
.tree-scroll span { height: 124px; margin-top: auto; }

.items { flex: 1; min-height: 0; display: flex; flex-direction: column; border: 1px solid #8a8a94; background: #fff; padding: 1px; overflow: hidden; }
.items table { width: 100%; border-collapse: collapse; table-layout: fixed; }
.items th { height: 20px; padding: 0; font-weight: 400; overflow: hidden; text-align: center; background: linear-gradient(#fff, #f5f5f5); border-bottom: 1px solid #ddd; }
.items th + th { width: 28px; padding-left: 10px; border-left: 1px solid #ddd; text-align: left; text-overflow: clip; }
.items td { padding: 0; }
.row { height: 21px; }
.row.tall { height: 37px; }
.row .pattern { width: 32px; height: 32px; margin-right: 1px; }
.dim { color: #777; }
.hscroll { margin-top: auto; height: 17px; display: flex; background: #f0f0f0; }
.hscroll span { width: 94px; background: #cdcdcd; margin-right: auto; }
.grip { height: 6px; border-bottom: 1px solid #c4c8d0; background: repeating-linear-gradient(90deg, #777 0 2px, transparent 2px 4px) center 2px / 18px 2px no-repeat; }
.stackbar { margin: 0 -1px 28px; }
.stackbar button { display: flex; align-items: center; gap: 9px; width: 100%; height: 28px; padding-left: 4px; font-weight: 700; border-bottom: 1px solid #c4c8d0; color: #000; }
.stackbar .on { background: #edffff; }
.stackbar svg { width: 24px; height: 24px; }

.center { flex: 1; min-width: 0; display: flex; flex-direction: column; background: #fff; }
.stage { flex: 1; min-height: 0; display: flex; }
.canvas { position: relative; flex: 1; min-width: 0; overflow: hidden; }
.plan { position: absolute; inset: 0; width: 100%; height: 100%; }
.gridlines path { fill: none; stroke: #dedede; stroke-dasharray: 4 2; }
.gridlines .strong { stroke: #999; }
.cover { fill: #fff; fill-opacity: .85; }
.wall { fill: #1919ff; stroke: #000; }
.miter { stroke: #6b6bff; }
.rm { fill: #fff; stroke: #111; }
.sel { stroke: #f00; stroke-width: 2; }
.dims { font: 12px "DejaVu Sans", sans-serif; fill: #111; }
.dims .redtext { fill: #f00; }
.stage-scroll { display: grid; grid-template-rows: 17px 375fr 24px 425fr 17px; }
.stage-scroll span { grid-row: 3; }
.stage-scroll .chev:last-child { grid-row: 5; }

/* context menu */
.context { position: absolute; left: 548px; top: 378px; width: 278px; padding: 3px 3px 1px; border: 1px solid #999; background: linear-gradient(90deg, #f0f0f0 29px, #e0e0e0 29px 30px, #f6f6f6 30px); box-shadow: 3px 3px 3px #8a8a8a; }
.context button { position: relative; display: flex; align-items: center; width: 100%; height: 22px; padding: 0 0 1px 3px; gap: 16px; color: #111; }
.context button:disabled { color: #808080; }
.context svg { width: 16px; height: 16px; }
.context .hover { background: #c3e0ee; border-bottom: 1px solid #2a9fd6; padding-bottom: 0; }
.context .check { width: 22px; height: 22px; margin: 0 -3px; padding: 2px; border: 1px solid #2a9fd6; background: #c0dfec; }
.rule { height: 1px; margin: 2px 0 2px 30px; background: #d4d4d4; }
.sub { margin-left: auto; margin-right: 6px; border: 4px solid transparent; border-left: 4px solid #000; border-right: 0; }
.menu-frame { position: absolute; left: 549px; top: 378px; width: 278px; height: 30px; border: 5px solid #e43a3b; border-radius: 5px; }
.tooltip { position: absolute; left: 747px; top: 404px; width: 146px; height: 26px; line-height: 24px; padding-left: 6px; white-space: nowrap; border: 1px solid #777; background: #f1f1f8; color: #666; }
.cursor { position: absolute; left: 747px; top: 387px; width: 12px; height: 18px; }

/* bottom bars */
.floorbar { height: 18px; display: flex; align-items: center; padding-left: 4px; }
.floorbar svg { width: 12px; height: 12px; }
.floorbar > button { margin-right: 8px; }
.tri { display: block; border: 4px solid transparent; }
.tri-up { border-bottom-color: #000; border-top: 0; }
.tri-left { border-right-color: #000; border-left: 0; }
.tri-right { border-left-color: #000; border-right: 0; }
.floorbar .floor { height: 18px; line-height: 22px; padding: 0 8px 0 5px; color: #00008b; font-weight: 700; border-right: 1px solid #999; }
.floorbar .next { margin-left: auto; margin-right: 3px; }
.hbar { width: 153px; height: 17px; display: flex; border: solid #cdcdcd; border-width: 0 3px; background: #f0f0f0; }
.hbar div { flex: 1; background: #fff; }
.hbar span { display: block; width: 8px; height: 17px; margin: 0 auto; background: #cdcdcd; }
.floorbar input { appearance: none; width: 140px; height: 17px; margin: 0 5px; background: linear-gradient(#d8d8d8, #d8d8d8) center / 100% 4px no-repeat; }
.floorbar input::-webkit-slider-thumb { appearance: none; width: 11px; height: 17px; border: 1px solid #aaa; background: #f0f0f0; }
.status { height: 20px; display: flex; align-items: center; background: #f5f5f5; padding: 0 3px 0 2px; }
.status > span { margin-right: auto; }
.roompick { width: 120px; height: 20px; background: #fff; margin-right: 5px; }
.status output { width: 248px; white-space: nowrap; }
.status svg { width: 14px; height: 14px; }
.square { display: block; width: 13px; height: 13px; margin-left: 2px; border: 1px solid #222; }

.side-right { width: 36px; flex: none; display: flex; flex-direction: column; border-left: 4px solid #d0d0d4; padding: 0 1px; }
.expand { height: 25px; padding-left: 8px; font-size: 14px; border-bottom: 1px solid #d8d8dc; }
.fill { flex: 1; }
```
